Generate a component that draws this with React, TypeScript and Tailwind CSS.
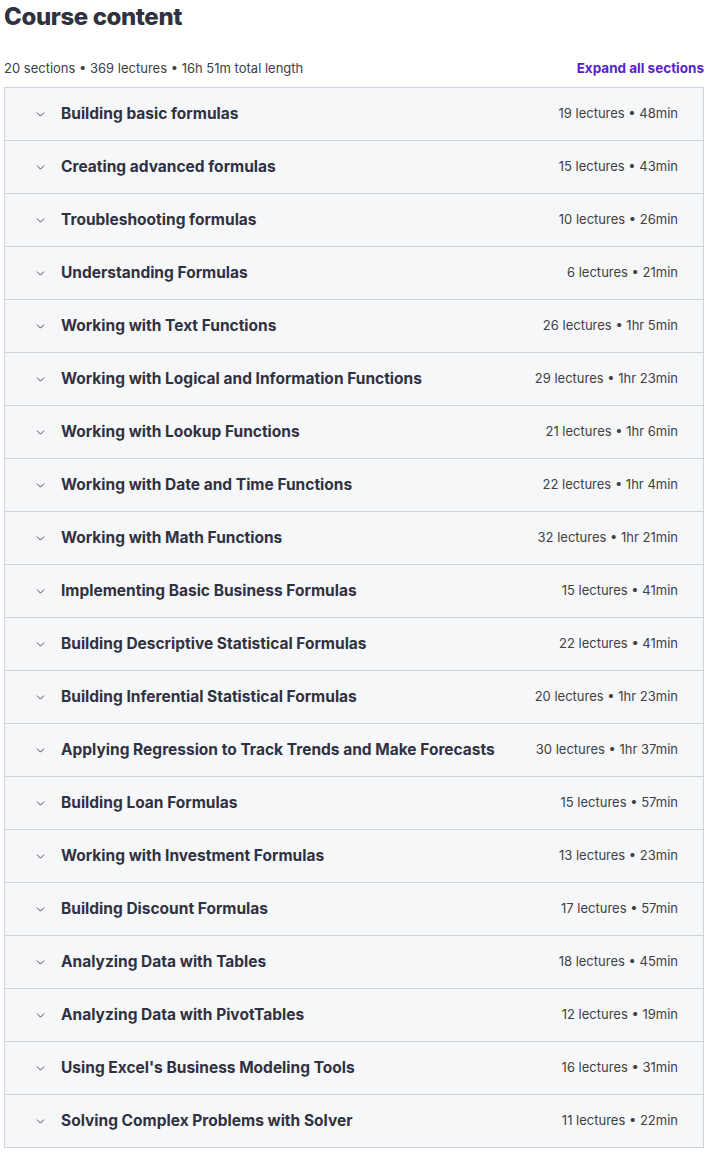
import { ChevronDown } from 'lucide-react';

const sections: [string, string][] = [
  ['Building basic formulas', '19 lectures • 48min'],
  ['Creating advanced formulas', '15 lectures • 43min'],
  ['Troubleshooting formulas', '10 lectures • 26min'],
  ['Understanding Formulas', '6 lectures • 21min'],
  ['Working with Text Functions', '26 lectures • 1hr 5min'],
  ['Working with Logical and Information Functions', '29 lectures • 1hr 23min'],
  ['Working with Lookup Functions', '21 lectures • 1hr 6min'],
  ['Working with Date and Time Functions', '22 lectures • 1hr 4min'],
  ['Working with Math Functions', '32 lectures • 1hr 21min'],
  ['Implementing Basic Business Formulas', '15 lectures • 41min'],
  ['Building Descriptive Statistical Formulas', '22 lectures • 41min'],
  ['Building Inferential Statistical Formulas', '20 lectures • 1hr 23min'],
  ['Applying Regression to Track Trends and Make Forecasts', '30 lectures • 1hr 37min'],
  ['Building Loan Formulas', '15 lectures • 57min'],
  ['Working with Investment Formulas', '13 lectures • 23min'],
  ['Building Discount Formulas', '17 lectures • 57min'],
  ['Analyzing Data with Tables', '18 lectures • 45min'],
  ['Analyzing Data with PivotTables', '12 lectures • 19min'],
  ["Using Excel's Business Modeling Tools", '16 lectures • 31min'],
  ['Solving Complex Problems with Solver', '11 lectures • 22min'],
];

export default function App() {
  return (
    <div className="px-1 text-[#303141] font-['Inter',sans-serif]">
      <h2 className="text-[24px] font-extrabold leading-[34px] tracking-[-0.4px]">Course content</h2>
      <div className="mt-[24px] mb-[9px] flex items-center justify-between text-[13px] leading-[20px] text-[#3e4143]">
        <span>20 sections • 369 lectures • 16h 51m total length</span>
        <button type="button" className="text-[13.5px] font-bold text-[#5624d0]">
          Expand all sections
        </button>
      </div>
      <div className="border border-[#d1d2e0] border-b-0">
        {sections.map(([title, meta]) => (
          <div
            key={title}
            className="flex h-[53px] items-center justify-between border-b border-[#d1d2e0] bg-[#f6f7f9] pl-[29px] pr-[25px]"
          >
            <div className="flex items-center">
              <ChevronDown className="h-[13px] w-[13px] text-[#303141]" strokeWidth={1.6} />
              <span className="ml-[14px] text-[15.5px] font-bold">{title}</span>
            </div>
            <span className="text-[13px] text-[#3e4143]">{meta}</span>
          </div>
        ))}
      </div>
    </div>
  );
}
